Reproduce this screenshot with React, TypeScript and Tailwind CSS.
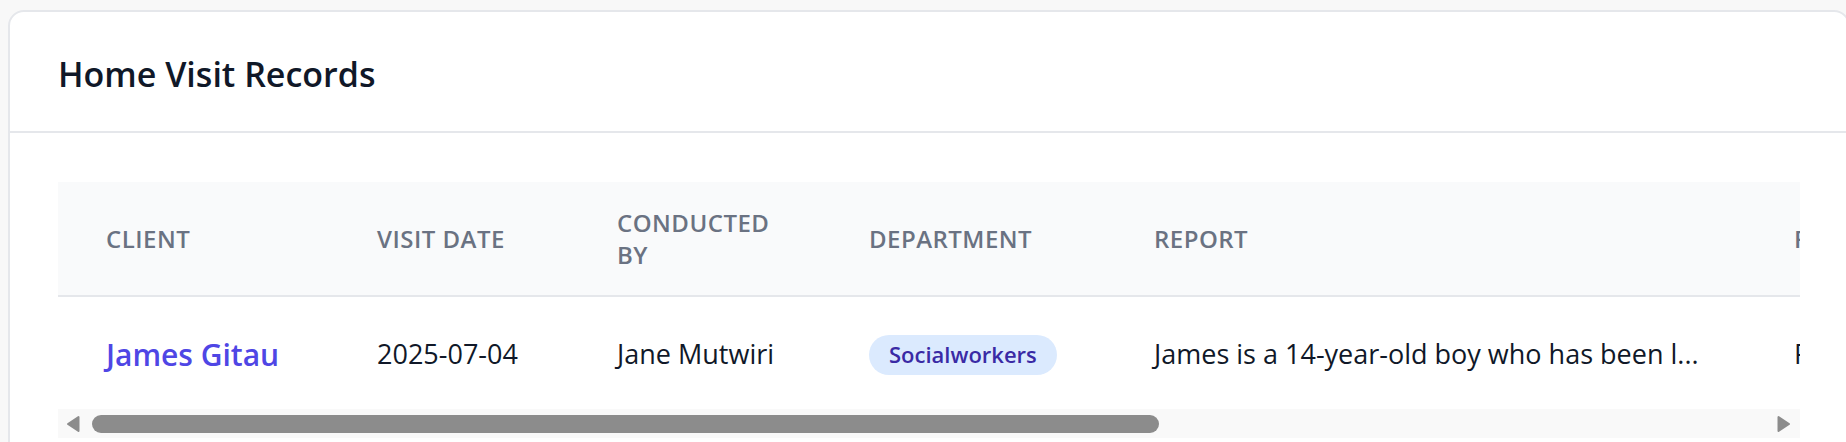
const headers = ['Client', 'Visit Date', 'Conducted By', 'Department', 'Report', 'Follow Up', 'Actions'];

const visits = [
  {
    client: 'James Gitau',
    date: '2025-07-04',
    conductedBy: 'Jane Mutwiri',
    department: 'Socialworkers',
    report: 'James is a 14-year-old boy who has been l...',
    followUp: 'Follow-up scheduled',
  },
];

function ArrowLeft() {
  return (
    <svg width="14" height="18" viewBox="0 0 14 18" className="shrink-0">
      <path d="M12.5 2 L12.5 16 L2 9 Z" fill="#8c8c8c" stroke="#8c8c8c" strokeWidth="2" strokeLinejoin="round" />
    </svg>
  );
}

function ArrowRight() {
  return (
    <svg width="14" height="18" viewBox="0 0 14 18" className="shrink-0">
      <path d="M1.5 2 L1.5 16 L12 9 Z" fill="#8c8c8c" stroke="#8c8c8c" strokeWidth="2" strokeLinejoin="round" />
    </svg>
  );
}

export default function App() {
  return (
    <div className="w-full h-[442px] overflow-hidden bg-[#f8f8f8] pl-2 pt-[10px] font-['Open_Sans',sans-serif]">
      <div className="w-[1842px] rounded-2xl border-2 border-[#e5e7eb] bg-white">
        {/* Card header */}
        <div className="px-[48px] pt-[34px] pb-[29px] border-b-2 border-[#e5e7eb]">
          <h2 className="text-[34px] leading-[56px] font-semibold text-gray-900">Home Visit Records</h2>
        </div>

        <div className="px-[48px] pt-[49px] pb-[48px]">
          <div className="w-[1742px] overflow-hidden">
            {/* Table */}
            <div className="w-[2766px]">
              <div className="grid grid-cols-[271px_240px_252px_285px_640px_540px_538px] items-center h-[115px] bg-[#f9fafb] border-b-2 border-[#e5e7eb]">
                {headers.map((h) => (
                  <div
                    key={h}
                    className="px-[48px] text-[24px] leading-[32px] font-semibold uppercase tracking-[0.02em] text-gray-500"
                  >
                    {h}
                  </div>
                ))}
              </div>

              {visits.map((v) => (
                <div
                  key={v.client}
                  className="grid grid-cols-[271px_240px_252px_285px_640px_540px_538px] items-center h-[112px] text-[27px] text-gray-900 whitespace-nowrap"
                >
                  <div className="px-[48px] pt-[2px] text-[30px] font-semibold text-[#4f46e5]">{v.client}</div>
                  <div className="px-[48px] pt-[2px]">{v.date}</div>
                  <div className="px-[48px] pt-[2px]">{v.conductedBy}</div>
                  <div className="px-[48px] pt-[2px]">
                    <span className="inline-flex items-center h-[40px] px-[20px] rounded-full bg-[#dbeafe] text-[#3a2aa5] text-[22px] font-semibold">
                      {v.department}
                    </span>
                  </div>
                  <div className="px-[48px] pt-[2px]">{v.report}</div>
                  <div className="px-[48px] pt-[2px]">{v.followUp}</div>
                  <div className="px-[48px] pt-[2px]">View</div>
                </div>
              ))}
            </div>

            {/* Horizontal scrollbar */}
            <div className="flex items-center h-[29px] bg-[#f9f9f9] pl-[8px] pr-[9px]">
              <ArrowLeft />
              <div className="ml-[12px] w-[1067px] h-[18px] rounded-full bg-[#8c8c8c]" />
              <div className="flex-1" />
              <ArrowRight />
            </div>
          </div>
        </div>
      </div>
    </div>
  );
}
